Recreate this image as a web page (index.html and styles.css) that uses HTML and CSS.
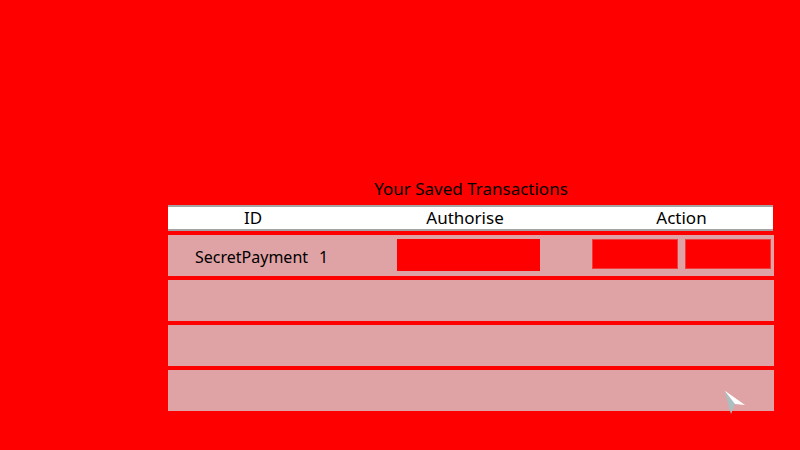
FILE: index.html
```html
<!DOCTYPE html>
<html>
<head>
<meta charset="utf-8">
<link rel="stylesheet" href="styles.css">
</head>
<body>
<div class="panel">
  <div class="title">Your Saved Transactions</div>
  <div class="thead">
    <div class="th th-id">ID</div>
    <div class="th th-auth">Authorise</div>
    <div class="th th-act">Action</div>
  </div>
  <div class="row">
    <div class="cell-id"><span class="name">SecretPayment</span><span class="num">1</span></div>
    <div class="auth-box"></div>
    <div class="actions">
      <div class="btn"></div>
      <div class="btn"></div>
    </div>
  </div>
  <div class="row"></div>
  <div class="row"></div>
  <div class="row"></div>
</div>
<svg class="cursor" width="24" height="26" viewBox="0 0 24 26">
  <polygon points="0.5,0.5 11,14 7,24" fill="#a9bfc0"/>
  <polygon points="0.5,0.5 21,15 11,14" fill="#ffffff"/>
</svg>
</body>
</html>
```
FILE: styles.css
```css
html, body {
  margin: 0;
  padding: 0;
  background: #ff0000;
  width: 800px;
  height: 450px;
  overflow: hidden;
  font-family: "Noto Sans", "Liberation Sans", sans-serif;
  color: #000;
}
.panel {
  margin-left: 168px;
  padding-top: 179px;
  width: 606px;
  display: flex;
  flex-direction: column;
  gap: 4px;
}
.title {
  font-size: 17px;
  line-height: 20px;
  text-align: center;
  margin-bottom: 2px;
}
.thead {
  width: 605px;
  background: #fff;
  border-top: 2px solid #a3a3a3;
  border-bottom: 2px solid #a3a3a3;
  display: grid;
  grid-template-columns: 170px 254px 1fr;
  font-size: 17px;
  line-height: 22px;
  height: 22px;
}
.th { text-align: center; }
.th-act { padding-right: 2px; }
.row {
  height: 41px;
  box-sizing: border-box;
  background: #e0a3a5;
  display: flex;
  align-items: flex-start;
  padding: 4px 3px 5px 0;
}
.cell-id {
  width: 229px;
  box-sizing: border-box;
  padding-left: 27px;
  padding-top: 4px;
  font-size: 16px;
  line-height: 28px;
  display: flex;
  gap: 11px;
}
.auth-box {
  width: 143px;
  height: 32px;
  background: #ff0000;
  margin-right: 52px;
}
.actions {
  display: flex;
  gap: 7px;
}
.btn {
  width: 86px;
  height: 30px;
  box-sizing: border-box;
  background: #ff0000;
  border: 1px solid #f23c3c;
}
.cursor {
  position: absolute;
  left: 724px;
  top: 390px;
}
```
